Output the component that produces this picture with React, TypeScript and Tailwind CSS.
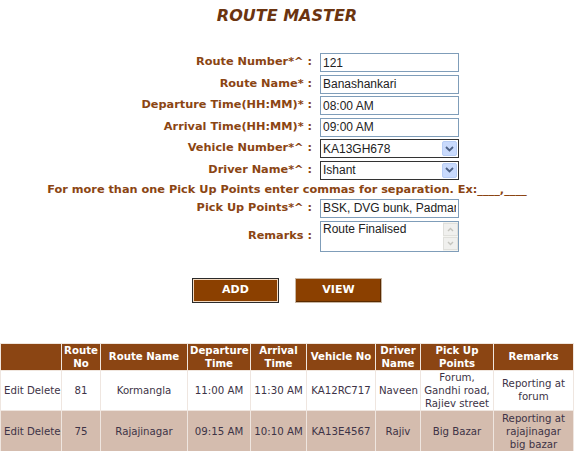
import React from "react";

const labelCls = "text-right font-bold text-[11.3px] leading-[18px] text-[#8b4513]";
const boxCls =
  "h-[19px] w-[139px] border border-[#7f9db9] bg-white px-[2px] text-[12px] leading-[17px] text-[#222] font-['Liberation_Sans',Arial,sans-serif]";
const cellCls = "border border-[#efe6e0] px-[3px]";

function SelectBox({ value }: { value: string }) {
  return (
    <div className="flex h-[19px] w-[139px] items-center border border-[#333] bg-white pl-[2px] font-['Liberation_Sans',Arial,sans-serif] text-[12px] text-[#222]">
      <span className="flex-1">{value}</span>
      <span className="mr-[1px] flex h-[15px] w-[15px] items-center justify-center rounded-[2px] border border-[#b8cdf5] bg-[#c9dafc]">
        <svg width="9" height="6" viewBox="0 0 9 6">
          <path d="M1 1 L4.5 4.5 L8 1" stroke="#4d6185" strokeWidth="1.8" fill="none" />
        </svg>
      </span>
    </div>
  );
}

const rows = [
  {
    no: "81",
    name: "Kormangla",
    dep: "11:00 AM",
    arr: "11:30 AM",
    veh: "KA12RC717",
    drv: "Naveen",
    pick: "Forum, Gandhi road, Rajiev street",
    rem: "Reporting at forum",
  },
  {
    no: "75",
    name: "Rajajinagar",
    dep: "09:15 AM",
    arr: "10:10 AM",
    veh: "KA13E4567",
    drv: "Rajiv",
    pick: "Big Bazar",
    rem: "Reporting at rajajinagar big bazar",
  },
];

export default function App() {
  return (
    <div className="h-[451px] w-[574px] overflow-hidden bg-white font-['DejaVu_Sans',Verdana,sans-serif]">
      <h1 className="pt-[6px] text-center text-[16px] font-bold italic leading-[20px] text-[#6b3410]">
        ROUTE MASTER
      </h1>

      <div className="mt-[27px] grid grid-cols-[312px_auto] gap-x-[8px] gap-y-[2.5px]">
        <div className={labelCls}>Route Number*^ :</div>
        <input className={boxCls} defaultValue="121" />
        <div className={labelCls}>Route Name* :</div>
        <input className={boxCls} defaultValue="Banashankari" />
        <div className={labelCls}>Departure Time(HH:MM)* :</div>
        <input className={boxCls} defaultValue="08:00 AM" />
        <div className={labelCls}>Arrival Time(HH:MM)* :</div>
        <input className={boxCls} defaultValue="09:00 AM" />
        <div className={labelCls}>Vehicle Number*^ :</div>
        <SelectBox value="KA13GH678" />
        <div className={labelCls}>Driver Name*^ :</div>
        <SelectBox value="Ishant" />
      </div>

      <p className="text-center text-[11.3px] font-bold leading-[19px] text-[#8b4513]">
        For more than one Pick Up Points enter commas for separation. Ex:____,____
      </p>

      <div className="grid grid-cols-[312px_auto] gap-x-[8px] gap-y-[3px]">
        <div className={labelCls}>Pick Up Points*^ :</div>
        <input className={boxCls} defaultValue="BSK, DVG bunk, Padmanabhanagar" />
        <div className={`${labelCls} pt-[6px]`}>Remarks :</div>
        <div className="flex h-[31px] w-[139px] border border-[#7f9db9] bg-white font-['Liberation_Sans',Arial,sans-serif] text-[12px] text-[#222]">
          <span className="flex-1 px-[2px] leading-[15px]">Route Finalised</span>
          <div className="flex w-[15px] flex-col justify-between bg-[#f4f4f0] py-[1px]">
            <span className="flex h-[13px] items-center justify-center border border-[#e0e0dc] bg-[#f0f0ee]">
              <svg width="7" height="5" viewBox="0 0 7 5">
                <path d="M1 4 L3.5 1.5 L6 4" stroke="#c5c5bf" strokeWidth="1.4" fill="none" />
              </svg>
            </span>
            <span className="flex h-[13px] items-center justify-center border border-[#e0e0dc] bg-[#f0f0ee]">
              <svg width="7" height="5" viewBox="0 0 7 5">
                <path d="M1 1 L3.5 3.5 L6 1" stroke="#c5c5bf" strokeWidth="1.4" fill="none" />
              </svg>
            </span>
          </div>
        </div>
      </div>

      <div className="mt-[26px] flex justify-center gap-[16px]">
        <button className="h-[25px] w-[87px] border border-[#2b2b2b] bg-[#8b4000] text-[11px] font-bold text-white shadow-[inset_1px_1px_0_#f3d9c0,inset_-1px_-1px_0_#f3d9c0]">
          ADD
        </button>
        <button className="h-[25px] w-[87px] border border-[#c9b6a2] bg-[#8b4000] text-[11px] font-bold text-white shadow-[inset_-1px_-1px_0_#5a2a00]">
          VIEW
        </button>
      </div>

      <table className="mt-[40px] w-[574px] table-fixed border-collapse text-center text-[10.2px] leading-[13px]">
        <thead>
          <tr className="h-[27px] bg-[#8b4513] font-bold text-white">
            <th className="w-[61px] border border-[#f0e6de] px-[2px]"></th>
            <th className="w-[39px] border border-[#f0e6de] px-[2px]">Route No</th>
            <th className="w-[87px] border border-[#f0e6de] px-[2px]">Route Name</th>
            <th className="w-[63px] border border-[#f0e6de] px-[2px]">Departure Time</th>
            <th className="w-[56px] border border-[#f0e6de] px-[2px]">Arrival Time</th>
            <th className="w-[69px] border border-[#f0e6de] px-[2px]">Vehicle No</th>
            <th className="w-[45px] border border-[#f0e6de] px-[2px]">Driver Name</th>
            <th className="w-[73px] border border-[#f0e6de] px-[2px]">Pick Up Points</th>
            <th className="border border-[#f0e6de] px-[2px]">Remarks</th>
          </tr>
        </thead>
        <tbody className="text-[#3d3346]">
          {rows.map((r, i) => (
            <tr key={r.no} className={i === 0 ? "h-[40px] bg-white" : "h-[42px] bg-[#d4bcae]"}>
              <td className={`${cellCls} whitespace-nowrap`}>Edit Delete</td>
              <td className={cellCls}>{r.no}</td>
              <td className={cellCls}>{r.name}</td>
              <td className={`${cellCls} whitespace-nowrap`}>{r.dep}</td>
              <td className={`${cellCls} whitespace-nowrap`}>{r.arr}</td>
              <td className={cellCls}>{r.veh}</td>
              <td className={cellCls}>{r.drv}</td>
              <td className={cellCls}>{r.pick}</td>
              <td className={cellCls}>{r.rem}</td>
            </tr>
          ))}
        </tbody>
      </table>
    </div>
  );
}
